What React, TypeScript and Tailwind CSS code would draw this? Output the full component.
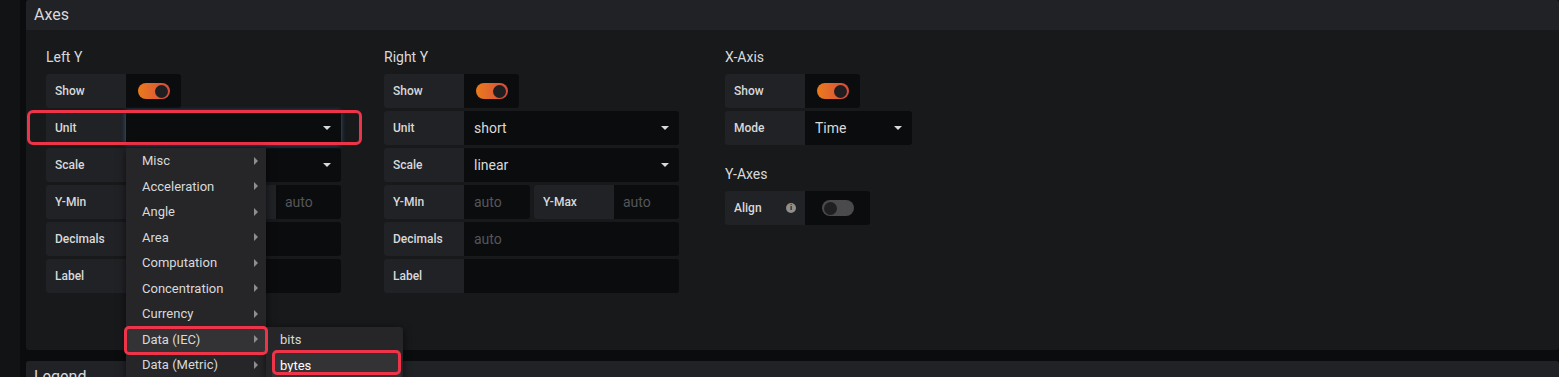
import type { ReactNode } from 'react';

const font = { fontFamily: 'Roboto, "Noto Sans", sans-serif' };

const labelClass =
  'flex h-full w-[80px] shrink-0 items-center rounded-l-[3px] bg-[#202226] pl-[9px] text-[12px] font-medium text-[#d8d9da]';

function Caret() {
  return <span className="h-0 w-0 border-x-[4px] border-t-[4px] border-x-transparent border-t-[#d8d9da]" />;
}

function MenuArrow() {
  return <span className="h-0 w-0 border-y-[4px] border-l-[4px] border-y-transparent border-l-[#8e8e8e]" />;
}

function Toggle({ on }: { on: boolean }) {
  return on ? (
    <div className="flex h-[16px] w-[32px] items-center justify-end rounded-full bg-gradient-to-r from-[#eb7b18] to-[#d44a3a] pr-[2px]">
      <div className="h-[13px] w-[13px] rounded-full bg-[#1f1f22]" />
    </div>
  ) : (
    <div className="flex h-[16px] w-[32px] items-center rounded-full bg-[#4a4a4c] pl-[2px]">
      <div className="h-[13px] w-[13px] rounded-full bg-[#1f1f22]" />
    </div>
  );
}

function Row({ children }: { children: ReactNode }) {
  return <div className="flex h-[34px] gap-[4px]">{children}</div>;
}

function ToggleRow({ label, width = 'w-[55px]', on = true, info = false }: { label: string; width?: string; on?: boolean; info?: boolean }) {
  return (
    <Row>
      <div className="flex h-full">
        <div className={`${labelClass} justify-between pr-[9px]`}>
          <span>{label}</span>
          {info && (
            <span className="flex h-[10px] w-[10px] items-center justify-center rounded-full bg-[#8e8e8e] text-[8px] font-bold leading-none text-[#202226]">
              i
            </span>
          )}
        </div>
        <div className={`flex h-full ${width} items-center justify-center rounded-r-[3px] bg-[#0b0c0e]`}>
          <Toggle on={on} />
        </div>
      </div>
    </Row>
  );
}

function SelectRow({ label, value, width = 'w-[215px]', focus = false }: { label: string; value: string; width?: string; focus?: boolean }) {
  return (
    <Row>
      <div className="flex h-full">
        <div className={labelClass}>{label}</div>
        <div
          className={`flex h-full ${width} items-center justify-between rounded-r-[3px] bg-[#0b0c0e] pl-[10px] pr-[10px] text-[14px] text-[#d8d9da] ${
            focus ? 'shadow-[0_0_5px_rgba(82,143,218,0.55)]' : ''
          }`}
        >
          <span>{value}</span>
          <Caret />
        </div>
      </div>
    </Row>
  );
}

function InputRow({ label, placeholder = '' }: { label: string; placeholder?: string }) {
  return (
    <Row>
      <div className="flex h-full">
        <div className={labelClass}>{label}</div>
        <div className="flex h-full w-[215px] items-center rounded-r-[3px] bg-[#0b0c0e] pl-[10px] text-[14px] text-[#555659]">{placeholder}</div>
      </div>
    </Row>
  );
}

// the left column's Y-Min input and Y-Max label sit under the open menu
function MinMaxRow({ covered = false }: { covered?: boolean }) {
  return (
    <Row>
      <div className="flex h-full">
        <div className={labelClass}>Y-Min</div>
        <div className="flex h-full w-[66px] items-center rounded-r-[3px] bg-[#0b0c0e] pl-[10px] text-[14px] text-[#555659]">
          {covered ? '' : 'auto'}
        </div>
      </div>
      <div className="flex h-full">
        <div className={labelClass}>{covered ? '' : 'Y-Max'}</div>
        <div className="flex h-full w-[65px] items-center rounded-r-[3px] bg-[#0b0c0e] pl-[9px] text-[14px] text-[#555659]">auto</div>
      </div>
    </Row>
  );
}

function Title({ children, className = '' }: { children: ReactNode; className?: string }) {
  return <div className={`mb-[7px] h-[20px] text-[14px] leading-[20px] text-[#d8d9da] ${className}`}>{children}</div>;
}

const menuItems = ['Misc', 'Acceleration', 'Angle', 'Area', 'Computation', 'Concentration', 'Currency', 'Data (IEC)', 'Data (Metric)'];

function UnitMenu() {
  return (
    <div className="absolute left-[80px] top-[37px] z-10 flex items-start">
      <div className="w-[140px] bg-[#262629] shadow-[0_2px_8px_rgba(0,0,0,0.6)]">
        {menuItems.map((item) => (
          <div
            key={item}
            className={`relative flex h-[25.5px] items-center justify-between pl-[16px] pr-[8px] text-[13px] text-[#d8d9da] ${
              item === 'Data (IEC)' ? 'bg-[#333336]' : ''
            }`}
          >
            <span>{item}</span>
            <MenuArrow />
            {item === 'Data (IEC)' && (
              <div className="absolute -left-[2px] -top-[1px] h-[29px] w-[144px] rounded-[5px] border-[3px] border-[#ee3448]" />
            )}
          </div>
        ))}
      </div>
      <div className="mt-[179px] w-[137px] rounded-r-[3px] bg-[#262629] shadow-[0_2px_8px_rgba(0,0,0,0.6)]">
        <div className="flex h-[25.5px] items-center pl-[14px] text-[13px] text-[#d8d9da]">bits</div>
        <div className="relative ml-[6px] mr-[2px] flex h-[25.5px] items-center bg-[#333336] pl-[8px] text-[13px] text-white">
          bytes
          <div className="absolute -top-[3px] left-0 h-[25px] w-[129px] rounded-[5px] border-[3px] border-[#ee3448]" />
        </div>
      </div>
    </div>
  );
}

export default function App() {
  return (
    <div className="flex h-[377px] w-[1559px] overflow-hidden bg-[#0b0c0e]" style={font}>
      <div className="h-full w-[20px] bg-[#121315]" />
      <div className="h-full w-[6px] bg-[#0b0c0e]" />
      <div className="flex flex-1 flex-col">
        <div className="overflow-visible rounded-[3px] bg-[#18191b]">
          <div className="flex h-[30px] items-center rounded-t-[3px] bg-[#212226] pl-[8px] text-[16px] text-[#d8d9da]">Axes</div>
          <div className="flex h-[320px] pl-[20px] pt-[17px]">
            <div className="w-[338px]">
              <Title>Left Y</Title>
              <div className="flex flex-col gap-[3px]">
                <ToggleRow label="Show" />
                <div className="relative">
                  <SelectRow label="Unit" value="" focus />
                  <div className="absolute -left-[19px] -top-[1px] h-[35px] w-[335px] rounded-[6px] border-[3px] border-[#ee3448]" />
                  <UnitMenu />
                </div>
                <SelectRow label="Scale" value="" />
                <MinMaxRow covered />
                <InputRow label="Decimals" />
                <InputRow label="Label" />
              </div>
            </div>
            <div className="w-[341px]">
              <Title>Right Y</Title>
              <div className="flex flex-col gap-[3px]">
                <ToggleRow label="Show" />
                <SelectRow label="Unit" value="short" />
                <SelectRow label="Scale" value="linear" />
                <MinMaxRow />
                <InputRow label="Decimals" placeholder="auto" />
                <InputRow label="Label" />
              </div>
            </div>
            <div>
              <Title>X-Axis</Title>
              <div className="flex flex-col gap-[3px]">
                <ToggleRow label="Show" />
                <SelectRow label="Mode" value="Time" width="w-[107px]" />
              </div>
              <Title className="mt-[19px]">Y-Axes</Title>
              <ToggleRow label="Align" width="w-[65px]" on={false} info />
            </div>
          </div>
        </div>
        <div className="h-[11px] shrink-0" />
        <div className="flex h-[30px] items-center rounded-t-[3px] bg-[#212226] pl-[8px] pt-[4px] text-[16px] text-[#d8d9da]">Legend</div>
      </div>
    </div>
  );
}
